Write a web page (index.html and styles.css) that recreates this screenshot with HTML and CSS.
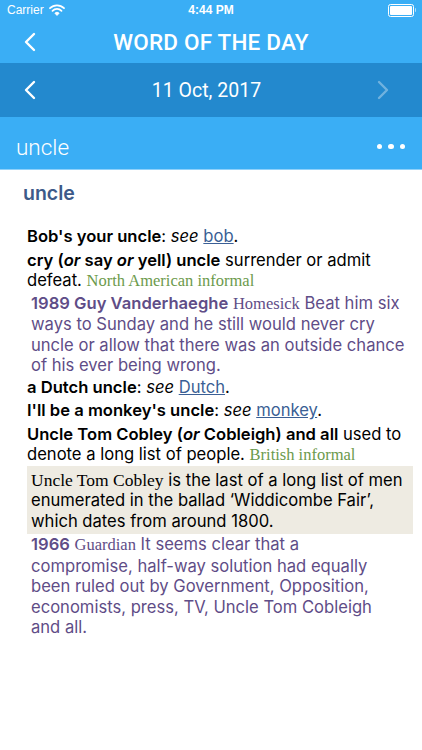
FILE: index.html
```html
<!DOCTYPE html>
<html>
<head>
<meta charset="utf-8">
<link rel="stylesheet" href="styles.css">
</head>
<body>
<div class="app">
  <div class="status">
    <div class="status-left">
      <span class="carrier">Carrier</span>
      <svg class="wifi" width="16" height="12" viewBox="0 0 16 12">
        <path d="M1 4.2 A10 10 0 0 1 15 4.2" fill="none" stroke="#fff" stroke-width="1.8" stroke-linecap="round"/>
        <path d="M3.5 6.8 A6.3 6.3 0 0 1 12.5 6.8" fill="none" stroke="#fff" stroke-width="1.8" stroke-linecap="round"/>
        <path d="M5.9 9.2 A3 3 0 0 1 10.1 9.2 L8 11.4 Z" fill="#fff" stroke="#fff" stroke-width="1" stroke-linejoin="round"/>
      </svg>
    </div>
    <div class="time">4:44 PM</div>
    <div class="status-right">
      <div class="battery"><div class="battery-fill"></div></div>
      <div class="battery-tip"></div>
    </div>
  </div>
  <div class="navbar">
    <svg class="chev chev-left" width="14" height="20" viewBox="0 0 14 20"><path d="M11 2 L3 10 L11 18" fill="none" stroke="#fff" stroke-width="2.4" stroke-linecap="round" stroke-linejoin="round"/></svg>
    <div class="nav-title">WORD OF THE DAY</div>
  </div>
  <div class="datebar">
    <svg class="chev" width="14" height="20" viewBox="0 0 14 20"><path d="M11 2 L3 10 L11 18" fill="none" stroke="#fff" stroke-width="2.4" stroke-linecap="round" stroke-linejoin="round"/></svg>
    <div class="date">11 Oct, 2017</div>
    <svg class="chev faded" width="14" height="20" viewBox="0 0 14 20"><path d="M3 2 L11 10 L3 18" fill="none" stroke="#fff" stroke-width="2.4" stroke-linecap="round" stroke-linejoin="round"/></svg>
  </div>
  <div class="wordbar">
    <div class="word">uncle</div>
    <div class="dots"><span></span><span></span><span></span></div>
  </div>
  <div class="content">
    <div class="headword">uncle</div>
    <p class="entry"><b>Bob's your uncle</b>: <i>see</i> <a class="link">bob</a>.</p>
    <p class="entry"><b>cry (<i>or</i> say <i>or</i> yell) uncle</b> surrender or admit defeat. <span class="reg">North American informal</span></p>
    <p class="cite"><b>1989 Guy Vanderhaeghe</b> <span class="src">Homesick</span> Beat him six ways to Sunday and he still would never cry uncle or allow that there was an outside chance of his ever being wrong.</p>
    <p class="entry"><b>a Dutch uncle</b>: <i>see</i> <a class="link">Dutch</a>.</p>
    <p class="entry"><b>I'll be a monkey's uncle</b>: <i>see</i> <a class="link">monkey</a>.</p>
    <p class="entry"><b>Uncle Tom Cobley (<i>or</i> Cobleigh) and all</b> used to denote a long list of people. <span class="reg">British informal</span></p>
    <p class="note"><span class="serif">Uncle Tom Cobley</span> is the last of a long list of men enumerated in the ballad ‘Widdicombe Fair’, which dates from around 1800.</p>
    <p class="cite cite-last"><b>1966</b> <span class="src">Guardian</span> It seems clear that a compromise, half-way solution had equally been ruled out by Government, Opposition, economists, press, TV, Uncle Tom Cobleigh and all.</p>
  </div>
</div>
</body>
</html>
```
FILE: styles.css
```css
html, body {
  margin: 0;
  padding: 0;
  background: #fff;
}
.app {
  width: 422px;
  min-height: 750px;
  font-family: "Liberation Sans", Arial, sans-serif;
}
.status {
  height: 20px;
  background: #3aaef5;
  color: #fff;
  display: flex;
  align-items: center;
  justify-content: space-between;
  padding: 0 6px 0 7px;
  font-size: 12px;
  position: relative;
}
.status-left {
  display: flex;
  align-items: center;
  gap: 5px;
}
.time {
  position: absolute;
  left: 0;
  right: 0;
  text-align: center;
  font-weight: bold;
  pointer-events: none;
}
.status-right {
  display: flex;
  align-items: center;
}
.battery {
  width: 22px;
  height: 9px;
  border: 1px solid #fff;
  border-radius: 2.5px;
  padding: 1px;
  box-sizing: content-box;
}
.battery-fill {
  width: 100%;
  height: 100%;
  background: #fff;
  border-radius: 1px;
}
.battery-tip {
  width: 1.5px;
  height: 4px;
  background: rgba(255,255,255,0.6);
  margin-left: 1px;
  border-radius: 0 1px 1px 0;
}
.navbar {
  height: 43px;
  background: #3aaef5;
  display: flex;
  align-items: center;
  position: relative;
  padding-left: 23px;
}
.nav-title {
  position: absolute;
  left: 0;
  right: 0;
  text-align: center;
  color: #fff;
  font-size: 22.5px;
  font-weight: 500;
  font-family: Roboto, "Liberation Sans", sans-serif;
  letter-spacing: 0.2px;
  pointer-events: none;
}
.datebar {
  height: 54px;
  background: #2389ce;
  display: flex;
  align-items: center;
  justify-content: space-between;
  padding: 0 32px 0 23px;
}
.date {
  color: #fff;
  font-size: 19.5px;
  font-family: Roboto, "Liberation Sans", sans-serif;
}
.faded {
  opacity: 0.35;
}
.wordbar {
  height: 53px;
  box-sizing: border-box;
  background: #3aaef5;
  border-bottom: 1px solid #8fd1fa;
  display: flex;
  align-items: center;
  justify-content: space-between;
  padding: 7px 17px 0 16px;
}
.word {
  color: #fff;
  font-size: 22.5px;
  font-family: Roboto, "Liberation Sans", sans-serif;
  font-weight: 300;
}
.dots {
  display: flex;
  gap: 6px;
}
.dots span {
  width: 5.5px;
  height: 5.5px;
  border-radius: 50%;
  background: #fff;
}
.content {
  padding: 10px 9px 20px 27px;
  font-family: Inter, "Liberation Sans", sans-serif;
  font-size: 16.6px;
  line-height: 20.5px;
  color: #000;
}
.content b {
  font-weight: 600;
}
.headword {
  color: #3d5a89;
  font-weight: 600;
  font-size: 19.5px;
  margin-left: -4px;
  line-height: 26px;
  margin-bottom: 20px;
}
p {
  margin: 0;
}
.entry {
  margin-top: 3px;
}
.cite + .entry {
  margin-top: 1px;
}
.link {
  color: #3b5f95;
  text-decoration: underline;
}
.reg {
  font-family: "Liberation Serif", "Times New Roman", serif;
  color: #6c9a4c;
  font-size: 16.5px;
}
.cite {
  color: #5f4d87;
  padding-left: 4px;
  padding-right: 7px;
  margin-top: 1px;
}
.cite-last {
  padding-right: 12px;
}
.note + .cite {
  margin-top: 0;
}
.src {
  font-family: "Liberation Serif", "Times New Roman", serif;
  font-size: 16.5px;
}
.note {
  background: #eeebe2;
  padding: 4px 4px 3px 4px;
  margin-top: 0;
}
.serif {
  font-family: "Liberation Serif", "Times New Roman", serif;
  font-size: 17.5px;
}
```
